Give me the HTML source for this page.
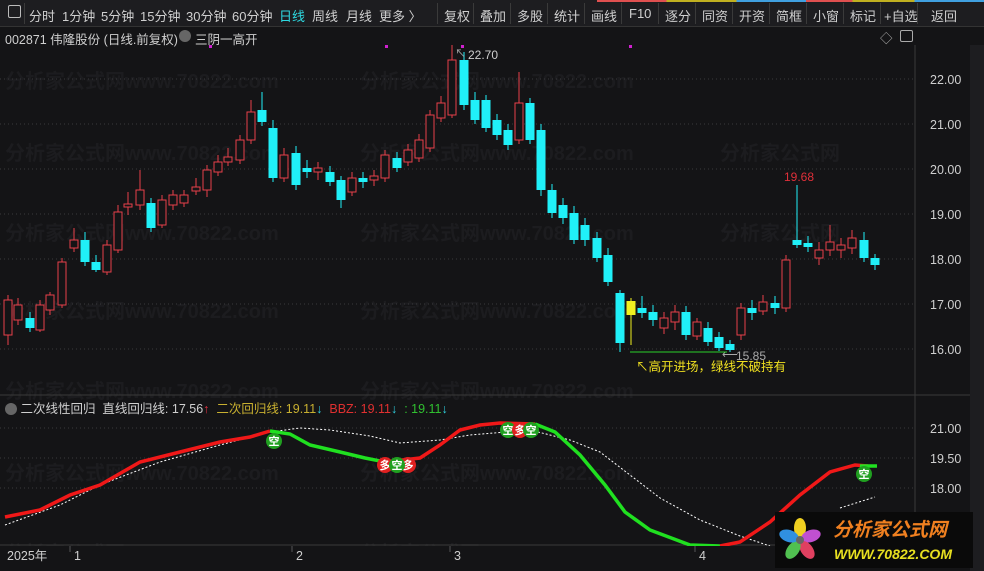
<!DOCTYPE html>
<html><head><meta charset="utf-8"><style>
body{margin:0;width:984px;height:571px;overflow:hidden;background:#141416;font-family:"Liberation Sans","Noto Sans CJK SC",sans-serif;}
#tb{position:absolute;left:0;top:0;width:984px;height:26px;background:#1d1d20;border-bottom:1px solid #333;}
#tb span{position:absolute;top:6px;font-size:13px;color:#cfcfcf;}
.sep{position:absolute;top:3px;width:1px;height:21px;background:#3a3a3a}
#hdr{position:absolute;left:0;top:27px;width:970px;height:18px;font-size:12.5px;color:#cfcfcf}
svg{position:absolute;left:0;top:0}
</style></head><body>
<svg width="984" height="571" id="s">
<rect x="0" y="0" width="984" height="571" fill="#141416"/>
<g fill="#1f1f22" font-size="20" font-weight="bold" font-family="Liberation Sans,Noto Sans CJK SC,sans-serif" opacity="0.8">
<text x="5" y="88">分析家公式网www.70822.com</text><text x="360" y="88">分析家公式网www.70822.com</text>
<text x="5" y="160">分析家公式网www.70822.com</text><text x="360" y="160">分析家公式网www.70822.com</text><text x="720" y="160">分析家公式网</text>
<text x="5" y="240">分析家公式网www.70822.com</text><text x="360" y="240">分析家公式网www.70822.com</text><text x="720" y="240">分析家公式网</text>
<text x="5" y="318">分析家公式网www.70822.com</text><text x="360" y="318">分析家公式网www.70822.com</text>
<text x="5" y="398">分析家公式网www.70822.com</text><text x="360" y="398">分析家公式网www.70822.com</text>
<text x="5" y="480">分析家公式网www.70822.com</text><text x="360" y="480">分析家公式网www.70822.com</text>
<text x="5" y="560">分析家公式网www.70822.com</text><text x="360" y="560">分析家公式网www.70822.com</text>
</g>
<g id="grid" stroke="#3a3a3c" stroke-dasharray="1 3"></g>
<line x1="915" y1="45" x2="915" y2="545" stroke="#3a3a3a"/>
<rect x="970" y="45" width="14" height="526" fill="#1d1d20"/>
<line x1="0" y1="395" x2="970" y2="395" stroke="#3a3a3a"/>
<line x1="0" y1="545" x2="970" y2="545" stroke="#3a3a3a"/>
<g id="c"></g>
<g id="ind"></g>
<g fill="#cfcfcf" font-size="12.5" font-family="Liberation Sans,sans-serif">
<text x="930" y="84">22.00</text><text x="930" y="129">21.00</text><text x="930" y="174">20.00</text><text x="930" y="219">19.00</text><text x="930" y="264">18.00</text><text x="930" y="309">17.00</text><text x="930" y="354">16.00</text>
<text x="930" y="433">21.00</text><text x="930" y="463">19.50</text><text x="930" y="493">18.00</text>
<text x="468" y="59" font-size="12">22.70</text><text x="736" y="360" font-size="12" fill="#aaa">15.85</text>
<text x="784" y="181" fill="#e0303a" font-size="12">19.68</text>
</g>
<text x="455" y="57" fill="#aaa" font-size="11">↖</text><text x="722" y="358" fill="#aaa" font-size="11">⟵</text>
<line x1="630" y1="352" x2="727" y2="352" stroke="#2ad02a"/>
<text x="636" y="371" fill="#f0e020" font-size="12.5" font-family="Liberation Sans,Noto Sans CJK SC,sans-serif">↖高开进场，绿线不破持有</text>
<g fill="#d020d0"><rect x="209" y="45" width="3" height="3"/><rect x="385" y="45" width="3" height="3"/><rect x="461" y="45" width="3" height="3"/><rect x="629" y="45" width="3" height="3"/></g>
<rect x="0" y="546" width="970" height="25" fill="#141416"/>
<g fill="#cfcfcf" font-size="12.5" font-family="Liberation Sans,Noto Sans CJK SC,sans-serif">
<text x="7" y="560">2025年</text><text x="74" y="560">1</text><text x="296" y="560">2</text><text x="454" y="560">3</text><text x="699" y="560">4</text></g>
<g stroke="#555"><line x1="70" y1="546" x2="70" y2="552"/><line x1="292" y1="546" x2="292" y2="552"/><line x1="450" y1="546" x2="450" y2="552"/><line x1="695" y1="546" x2="695" y2="552"/></g>
<rect x="775" y="512" width="198" height="56" fill="#0a0a0a"/>
<g transform="translate(800,540)">
<ellipse cx="0" cy="-12" rx="6" ry="10" fill="#f0d020"/><ellipse cx="11" cy="-4" rx="6" ry="10" transform="rotate(72 11 -4)" fill="#c050d0"/>
<ellipse cx="7" cy="10" rx="6" ry="10" transform="rotate(144 7 10)" fill="#e04060"/><ellipse cx="-7" cy="10" rx="6" ry="10" transform="rotate(216 -7 10)" fill="#50c050"/>
<ellipse cx="-11" cy="-4" rx="6" ry="10" transform="rotate(288 -11 -4)" fill="#3090e0"/><circle cx="0" cy="0" r="4" fill="#666"/></g>
<text x="833" y="536" fill="#f08020" font-size="19" font-weight="bold" font-style="italic" font-family="Liberation Sans,Noto Sans CJK SC,sans-serif">分析家公式网</text>
<text x="834" y="559" fill="#e8e020" font-size="14" font-weight="bold" font-style="italic" font-family="Liberation Sans,sans-serif">WWW.70822.COM</text>
</svg>
<div id="tb">
<span style="left:8px;top:5px;width:11px;height:11px;border:1px solid #bbb;border-radius:2px;"></span>
<div class="sep" style="left:24px"></div>
<span style="left:29px">分时</span><span style="left:62px">1分钟</span><span style="left:101px">5分钟</span><span style="left:140px">15分钟</span><span style="left:186px">30分钟</span><span style="left:232px">60分钟</span><span style="left:279px;color:#2ed8e0">日线</span><span style="left:312px">周线</span><span style="left:346px">月线</span><span style="left:379px">更多 〉</span>
<div class="sep" style="left:437px"></div><span style="left:444px">复权</span><div class="sep" style="left:473px"></div><span style="left:480px">叠加</span><div class="sep" style="left:510px"></div><span style="left:517px">多股</span><div class="sep" style="left:547px"></div><span style="left:554px">统计</span><div class="sep" style="left:584px"></div><span style="left:591px">画线</span><div class="sep" style="left:621px"></div><span style="left:629px">F10</span><div class="sep" style="left:658px"></div><span style="left:665px">逐分</span><div class="sep" style="left:695px"></div><span style="left:702px">同资</span><div class="sep" style="left:732px"></div><span style="left:739px">开资</span><div class="sep" style="left:769px"></div><span style="left:776px">简框</span><div class="sep" style="left:806px"></div><span style="left:813px">小窗</span><div class="sep" style="left:843px"></div><span style="left:850px">标记</span><div class="sep" style="left:880px"></div><span style="left:884px">+自选</span><div class="sep" style="left:917px"></div><span style="left:931px">返回</span>
<div style="position:absolute;left:597px;top:0;width:387px;height:2px;background:linear-gradient(90deg,#e05050 0 18%,#c0b020 18% 36%,#40a0e0 36% 54%,#e05050 54% 66%,#c0b020 66% 82%,#40a0e0 82%)"></div>
</div>
<div id="hdr"><span style="position:absolute;left:5px;top:2px">002871 伟隆股份 (日线.前复权)</span>
<span style="position:absolute;left:179px;top:3px;width:12px;height:12px;border-radius:6px;background:#666"></span>
<span style="position:absolute;left:195px;top:2px">三阴一高开</span>
<span style="position:absolute;left:880px;top:1px;color:#aaa">◇</span><span style="position:absolute;left:900px;top:3px;width:11px;height:10px;border:1px solid #aaa;border-radius:2px"></span></div>
<div style="position:absolute;left:5px;top:398px;font-size:12.5px;color:#cfcfcf;white-space:nowrap">
<span style="display:inline-block;width:12px;height:12px;border-radius:6px;background:#666;vertical-align:-2px"></span> 二次线性回归&nbsp; 直线回归线: 17.56<span style="color:#e03040">↑</span>&nbsp; <span style="color:#c8b030">二次回归线: 19.11</span><span style="color:#30d0e0">↓</span>&nbsp; <span style="color:#e03030">BBZ: 19.11</span><span style="color:#30d0e0">↓</span>&nbsp; <span style="color:#30c030">: 19.11</span><span style="color:#30d0e0">↓</span></div>
<script>
var NS="http://www.w3.org/2000/svg";
function el(p,t,a){var e=document.createElementNS(NS,t);for(var k in a)e.setAttribute(k,a[k]);p.appendChild(e);return e;}
var g=document.getElementById('grid');
[79,124,169,214,259,304,349,428,458,488].forEach(function(y){el(g,'line',{x1:0,y1:y,x2:915,y2:y});});
var C=[[8,300,335,295,345,'r'],[18,305,320,298,325,'r'],[30,318,328,312,332,'c'],[40,305,330,300,332,'r'],[50,295,310,292,315,'r'],[62,262,305,258,308,'r'],[74,240,248,228,252,'r'],[85,240,262,232,266,'c'],[96,262,270,255,272,'c'],[107,245,272,240,275,'r'],[118,212,250,205,253,'r'],[128,204,207,192,215,'r'],[140,190,205,170,210,'r'],[151,203,228,198,232,'c'],[162,200,225,195,228,'r'],[173,195,205,190,210,'r'],[184,195,203,190,207,'r'],[196,187,191,178,195,'r'],[207,170,190,165,197,'r'],[218,162,172,155,176,'r'],[228,157,162,148,166,'r'],[240,140,160,135,164,'r'],[251,112,140,100,144,'r'],[262,110,122,92,126,'c'],[273,128,178,120,182,'c'],[284,155,178,148,182,'r'],[296,153,185,146,190,'c'],[307,168,172,160,178,'c'],[318,168,172,162,180,'r'],[330,172,182,166,186,'c'],[341,180,200,176,208,'c'],[352,178,192,172,196,'r'],[363,178,182,172,188,'c'],[374,176,180,170,186,'r'],[385,155,178,150,182,'r'],[397,158,168,152,172,'c'],[408,150,162,144,166,'r'],[419,140,158,134,162,'r'],[430,115,148,110,152,'r'],[441,103,118,96,122,'r'],[452,60,115,45,118,'r'],[464,60,105,52,110,'c'],[475,100,120,92,124,'c'],[486,100,128,95,132,'c'],[497,120,135,114,140,'c'],[508,130,145,124,150,'c'],[519,103,140,72,144,'r'],[530,103,140,98,144,'c'],[541,130,190,124,196,'c'],[552,190,213,184,218,'c'],[563,205,218,198,224,'c'],[574,213,240,206,244,'c'],[585,225,240,218,246,'c'],[597,238,258,232,262,'c'],[608,255,282,248,286,'c'],[620,293,343,290,352,'c'],[631,301,315,298,345,'y'],[642,308,313,296,318,'c'],[653,312,320,305,326,'c'],[664,318,328,312,334,'r'],[675,312,322,305,330,'r'],[686,312,335,306,340,'c'],[697,322,336,318,340,'r'],[708,328,342,322,346,'c'],[719,337,348,332,351,'c'],[730,344,350,340,352,'c'],[741,308,335,303,340,'r'],[752,308,313,300,320,'c'],[763,302,311,295,315,'r'],[775,303,308,296,314,'c'],[786,260,308,255,312,'r'],[797,240,245,185,248,'c'],[808,243,247,236,252,'c'],[819,250,258,242,265,'r'],[830,242,250,225,256,'r'],[841,245,250,238,258,'r'],[852,238,248,230,254,'r'],[864,240,258,232,262,'c'],[875,258,265,254,270,'c']];
var cg=document.getElementById('c');
C.forEach(function(d){var col=d[5]=='r'?'#e8404a':(d[5]=='y'?'#f0f020':'#20f0f8');
el(cg,'line',{x1:d[0],y1:d[3],x2:d[0],y2:d[4],stroke:col});
if(d[5]=='r')el(cg,'rect',{x:d[0]-4,y:d[1],width:8,height:Math.max(1,d[2]-d[1]),fill:'#141416',stroke:col});
else el(cg,'rect',{x:d[0]-4.5,y:d[1],width:9,height:Math.max(1,d[2]-d[1]),fill:col});});
var ig=document.getElementById('ind');
el(ig,'polyline',{points:'5,525 60,505 100,485 160,462 220,445 270,432 300,428 330,430 370,436 400,443 440,440 470,435 530,430 570,440 600,452 630,475 660,498 700,520 740,536 770,546',fill:'none',stroke:'#fff','stroke-dasharray':'2 2'});
el(ig,'polyline',{points:'840,508 875,497',fill:'none',stroke:'#fff','stroke-dasharray':'2 2'});
el(ig,'polyline',{points:'5,517 40,510 70,495 100,485 140,462 180,452 220,442 250,437 270,431',fill:'none',stroke:'#f01818','stroke-width':3.5});
el(ig,'polyline',{points:'270,431 290,434 310,445 340,452 365,458 385,462',fill:'none',stroke:'#20e020','stroke-width':3.5});
el(ig,'polyline',{points:'385,462 420,458 440,445 460,430 480,425 500,423 535,424',fill:'none',stroke:'#f01818','stroke-width':3.5});
el(ig,'polyline',{points:'535,424 555,432 580,455 605,485 625,512 650,530 690,545 720,546',fill:'none',stroke:'#20e020','stroke-width':3.5});
el(ig,'polyline',{points:'720,546 740,542 770,522 800,495 830,472 855,465 868,466',fill:'none',stroke:'#f01818','stroke-width':3.5});
el(ig,'polyline',{points:'860,466 877,466',fill:'none',stroke:'#20e020','stroke-width':3.5});
function badge(x,y,t,c){el(ig,'circle',{cx:x,cy:y,r:8,fill:c});var e=el(ig,'text',{x:x,y:y+4,fill:'#fff','font-size':11,'text-anchor':'middle','font-weight':'bold'});e.textContent=t;}
badge(385,465,'多','#e02020');badge(408,465,'多','#e02020');badge(397,465,'空','#20a020');
badge(274,441,'空','#20a020');badge(508,430,'空','#20a020');badge(520,430,'多','#e02020');badge(531,430,'空','#20a020');badge(864,474,'空','#20a020');
</script>
</body></html>
